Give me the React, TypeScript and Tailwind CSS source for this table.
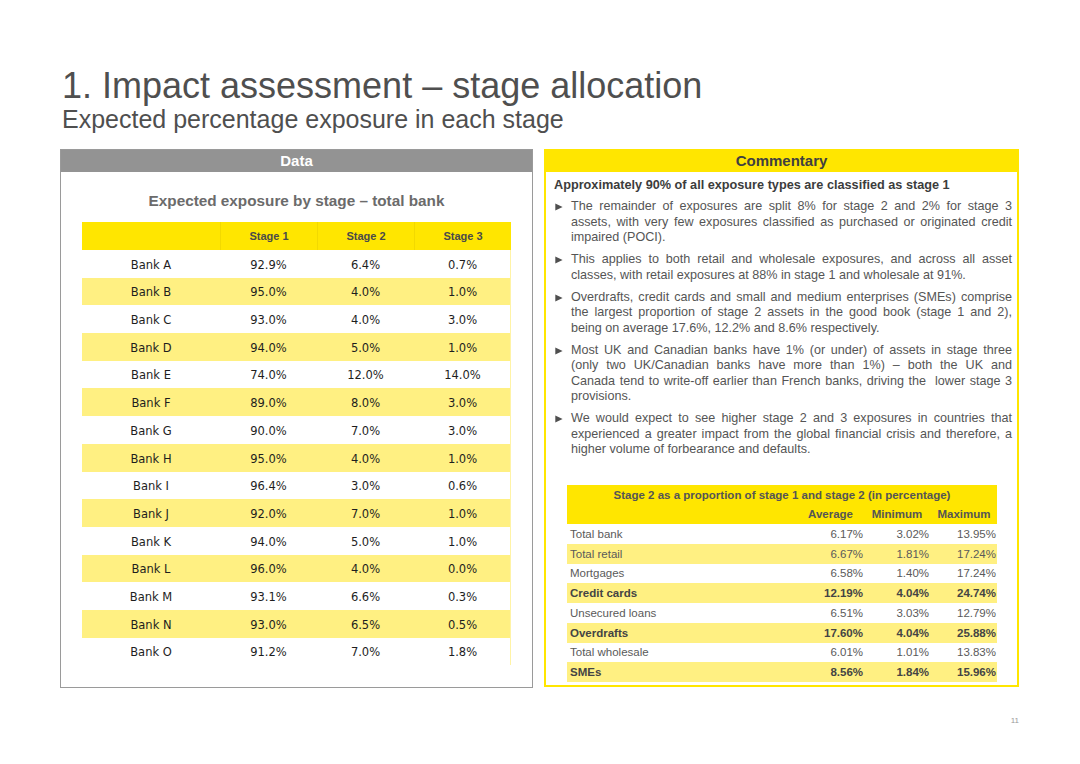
const banks: [string, string, string, string][] = [
  ['Bank A', '92.9%', '6.4%', '0.7%'],
  ['Bank B', '95.0%', '4.0%', '1.0%'],
  ['Bank C', '93.0%', '4.0%', '3.0%'],
  ['Bank D', '94.0%', '5.0%', '1.0%'],
  ['Bank E', '74.0%', '12.0%', '14.0%'],
  ['Bank F', '89.0%', '8.0%', '3.0%'],
  ['Bank G', '90.0%', '7.0%', '3.0%'],
  ['Bank H', '95.0%', '4.0%', '1.0%'],
  ['Bank I', '96.4%', '3.0%', '0.6%'],
  ['Bank J', '92.0%', '7.0%', '1.0%'],
  ['Bank K', '94.0%', '5.0%', '1.0%'],
  ['Bank L', '96.0%', '4.0%', '0.0%'],
  ['Bank M', '93.1%', '6.6%', '0.3%'],
  ['Bank N', '93.0%', '6.5%', '0.5%'],
  ['Bank O', '91.2%', '7.0%', '1.8%'],
]

const proportions: { label: string; avg: string; min: string; max: string; bold?: boolean }[] = [
  { label: 'Total bank', avg: '6.17%', min: '3.02%', max: '13.95%' },
  { label: 'Total retail', avg: '6.67%', min: '1.81%', max: '17.24%' },
  { label: 'Mortgages', avg: '6.58%', min: '1.40%', max: '17.24%' },
  { label: 'Credit cards', avg: '12.19%', min: '4.04%', max: '24.74%', bold: true },
  { label: 'Unsecured loans', avg: '6.51%', min: '3.03%', max: '12.79%' },
  { label: 'Overdrafts', avg: '17.60%', min: '4.04%', max: '25.88%', bold: true },
  { label: 'Total wholesale', avg: '6.01%', min: '1.01%', max: '13.83%' },
  { label: 'SMEs', avg: '8.56%', min: '1.84%', max: '15.96%', bold: true },
]

// lines broken as on the slide, every line but the last is justified
const bullets: string[][] = [
  [
    'The remainder of exposures are split 8% for stage 2 and 2% for stage 3',
    'assets, with very few exposures classified as purchased or originated credit',
    'impaired (POCI).',
  ],
  [
    'This applies to both retail and wholesale exposures, and across all asset',
    'classes, with retail exposures at 88% in stage 1 and wholesale at 91%.',
  ],
  [
    'Overdrafts, credit cards and small and medium enterprises (SMEs) comprise',
    'the largest proportion of stage 2 assets in the good book (stage 1 and 2),',
    'being on average 17.6%, 12.2% and 8.6% respectively.',
  ],
  [
    'Most UK and Canadian banks have 1% (or under) of assets in stage three',
    '(only two UK/Canadian banks have more than 1%) \u2013 both the UK and',
    'Canada tend to write-off earlier than French banks, driving the\u00a0 lower stage 3',
    'provisions.',
  ],
  [
    'We would expect to see higher stage 2 and 3 exposures in countries that',
    'experienced a greater impact from the global financial crisis and therefore, a',
    'higher volume of forbearance and defaults.',
  ],
]

function Arrow() {
  return (
    <svg width="8" height="8" viewBox="0 0 8 8" className="shrink-0 mt-[4px]">
      <path d="M0.3 0.4 L7.6 4 L0.3 7.6 Z" fill="#4f4f4f" />
    </svg>
  )
}

function DataPanel() {
  return (
    <div className="w-[473px] h-[539px] border border-[#9a9a9a] flex flex-col">
      <div className="h-[22px] bg-[#939393] text-white font-bold text-[15px] flex items-center justify-center">
        Data
      </div>
      <div className="mt-[20px] text-center font-bold text-[15.3px] leading-[18px] text-[#6b6b6b]">
        Expected exposure by stage – total bank
      </div>
      <div className="mt-[12px] ml-[21px] w-[429px]">
        <div className="grid grid-cols-[138px_97px_97px_97px] h-[28px] bg-[#FFE600] text-[11px] font-bold text-[#4a4a4a]">
          <div />
          <div className="flex items-center justify-center border-l border-[#f2d900]">Stage 1</div>
          <div className="flex items-center justify-center border-l border-[#f2d900]">Stage 2</div>
          <div className="flex items-center justify-center border-l border-[#f2d900]">Stage 3</div>
        </div>
        {banks.map((row, i) => (
          <div
            key={row[0]}
            className={`grid grid-cols-[138px_97px_97px_97px] h-[27.7px] border-r border-[#fff3a6] font-['DejaVu_Sans',Verdana,sans-serif] text-[11.5px] text-[#1e1e1e] ${
              i % 2 === 1 ? 'bg-[#FFF082]' : 'bg-white'
            }`}
          >
            {row.map((cell, j) => (
              <div key={j} className="flex items-center justify-center pt-[3px]">
                {cell}
              </div>
            ))}
          </div>
        ))}
      </div>
    </div>
  )
}

function CommentaryPanel() {
  return (
    <div className="w-[475px] h-[538px] border-2 border-[#FFE600] flex flex-col">
      <div className="h-[21px] bg-[#FFE600] font-bold text-[15px] text-[#404040] flex items-center justify-center">
        Commentary
      </div>
      <div className="mt-[6px] pl-[8px] font-bold text-[12.7px] leading-[15px] text-[#3c3c3c]">
        Approximately 90% of all exposure types are classified as stage 1
      </div>
      <div className="mt-[6px] pl-[9px] pr-[5px] flex flex-col gap-[6.5px] text-[12.6px] leading-[15.5px] text-[#555555]">
        {bullets.map((lines) => (
          <div key={lines[0]} className="flex gap-[8px]">
            <Arrow />
            <div className="flex-1">
              {lines.map((l, k) => (
                <span
                  key={k}
                  className={`block whitespace-nowrap ${
                    k < lines.length - 1 ? 'text-justify [text-align-last:justify]' : ''
                  }`}
                >
                  {l}
                </span>
              ))}
            </div>
          </div>
        ))}
      </div>
      <div className="mt-auto mb-[3px] ml-[21px] w-[430px] text-[11.5px]">
        <div className="h-[20px] bg-[#FFE600] font-bold text-[#555555] flex items-center justify-center pt-[1px]">
          Stage 2 as a proportion of stage 1 and stage 2 (in percentage)
        </div>
        <div className="grid grid-cols-[231px_65px_68px_66px] h-[19px] bg-[#FFE600] font-bold text-[#555555]">
          <div />
          <div className="flex items-center justify-center">Average</div>
          <div className="flex items-center justify-center">Minimum</div>
          <div className="flex items-center justify-center">Maximum</div>
        </div>
        {proportions.map((r, i) => (
          <div
            key={r.label}
            className={`grid grid-cols-[231px_65px_68px_66px] h-[19.75px] items-center pt-[1px] ${
              i % 2 === 1 ? 'bg-[#FFF082]' : 'bg-white'
            } ${r.bold ? 'font-bold text-[#444444]' : 'text-[#5a5a5a]'}`}
          >
            <div className="pl-[3px]">{r.label}</div>
            <div className="text-right">{r.avg}</div>
            <div className="text-right pr-[2px]">{r.min}</div>
            <div className="text-right pr-[1px]">{r.max}</div>
          </div>
        ))}
      </div>
    </div>
  )
}

export default function App() {
  return (
    <div className="w-[1080px] h-[764px] bg-white font-['Liberation_Sans',Arial,sans-serif] flex flex-col">
      <div className="pl-[62px] pt-[68px] text-[#4f4f4f]">
        <h1 className="text-[36px] leading-[36px]">1. Impact assessment – stage allocation</h1>
        <h2 className="mt-[3px] text-[25px] leading-[25px]">Expected percentage exposure in each stage</h2>
      </div>
      <div className="mt-[17px] pl-[60px] flex items-start gap-[11px]">
        <DataPanel />
        <CommentaryPanel />
      </div>
      <div className="w-[1019px] mt-[27px] text-right text-[8px] text-[#9a9a9a]">11</div>
    </div>
  )
}
